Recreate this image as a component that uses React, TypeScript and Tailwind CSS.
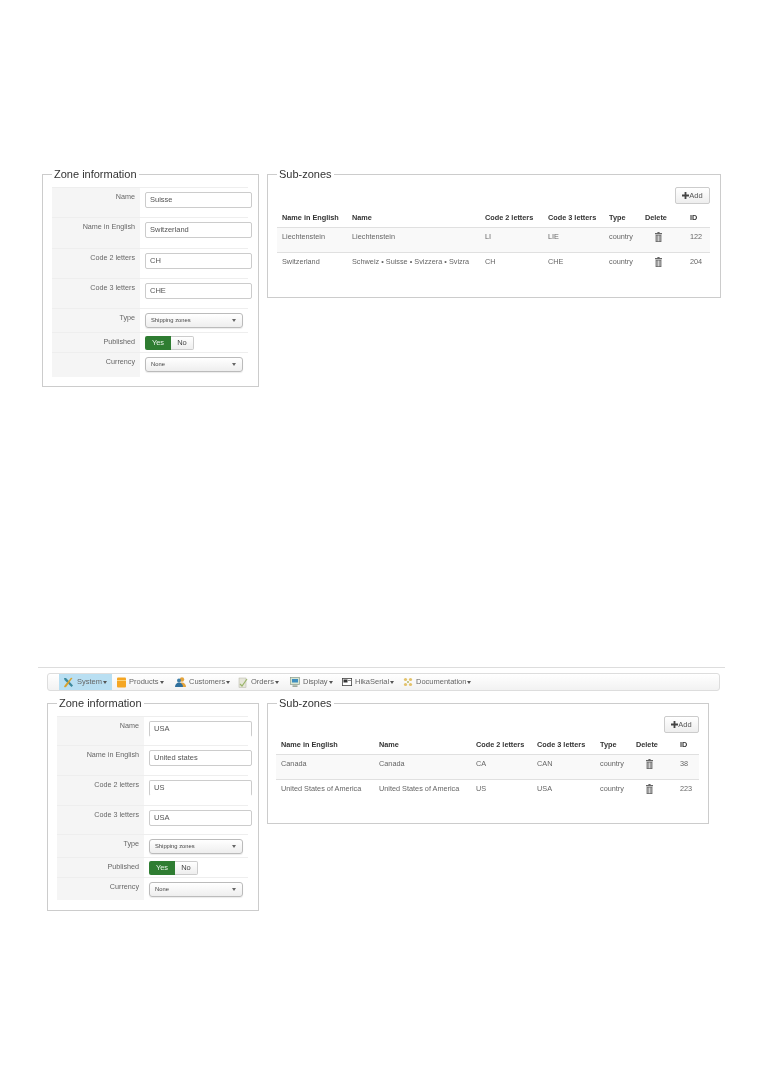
import { ReactNode } from "react";

type Field = { label: string; kind: "input" | "select" | "toggle"; value?: string; rowClass: string; openBottom?: boolean };
type SubZone = { english: string; name: string; code2: string; code3: string; id: number };

const topFields: Field[] = [
  { label: "Name", kind: "input", value: "Suisse", rowClass: "h-[30px]" },
  { label: "Name in English", kind: "input", value: "Switzerland", rowClass: "h-[31px]" },
  { label: "Code 2 letters", kind: "input", value: "CH", rowClass: "h-[30px]" },
  { label: "Code 3 letters", kind: "input", value: "CHE", rowClass: "h-[30px]" },
  { label: "Type", kind: "select", value: "Shipping zones", rowClass: "h-[24px]" },
  { label: "Published", kind: "toggle", rowClass: "h-[20px]" },
  { label: "Currency", kind: "select", value: "None", rowClass: "h-[25px]" },
];

const bottomFields: Field[] = [
  { label: "Name", kind: "input", value: "USA", rowClass: "h-[29px]", openBottom: true },
  { label: "Name in English", kind: "input", value: "United states", rowClass: "h-[30px]" },
  { label: "Code 2 letters", kind: "input", value: "US", rowClass: "h-[30px]", openBottom: true },
  { label: "Code 3 letters", kind: "input", value: "USA", rowClass: "h-[29px]" },
  { label: "Type", kind: "select", value: "Shipping zones", rowClass: "h-[23px]" },
  { label: "Published", kind: "toggle", rowClass: "h-[20px]" },
  { label: "Currency", kind: "select", value: "None", rowClass: "h-[23px]" },
];

const swissZones: SubZone[] = [
  { english: "Liechtenstein", name: "Liechtenstein", code2: "LI", code3: "LIE", id: 122 },
  { english: "Switzerland", name: "Schweiz • Suisse • Svizzera • Svizra", code2: "CH", code3: "CHE", id: 204 },
];

const usZones: SubZone[] = [
  { english: "Canada", name: "Canada", code2: "CA", code3: "CAN", id: 38 },
  { english: "United States of America", name: "United States of America", code2: "US", code3: "USA", id: 223 },
];

const Caret = () => <span className="ml-[1px] inline-block border-x-[2px] border-t-[3px] border-x-transparent border-t-[#555]" />;

const Trash = () => (
  <svg width="7" height="10" viewBox="0 0 7 10" className="block" fill="#666">
    <path d="M2.4 0h2.2v1H7v1.2H0V1h2.4z" />
    <path d="M.6 2.8h5.8V10H.6zM1.7 3.6v5.6h.7V3.6zm1.5 0v5.6h.7V3.6zm1.4 0v5.6h.7V3.600z" fillRule="evenodd" />
  </svg>
);

const FieldControl = ({ field }: { field: Field }) => {
  if (field.kind === "input") {
    return (
      <div
        className={`flex h-[16px] w-full items-center rounded-[2px] border border-[#ccc] bg-white pl-[4px] text-[7.5px] text-[#555] ${
          field.openBottom ? "border-b-transparent" : ""
        }`}
      >
        {field.value}
      </div>
    );
  }
  if (field.kind === "select") {
    return (
      <div className="flex h-[15px] items-center justify-between rounded-[3px] border border-[#bbb] bg-gradient-to-b from-white to-[#eee] pl-[5px] pr-[6px] text-[5.8px] text-[#444] shadow-[0_1px_1px_rgba(0,0,0,0.08)]">
        {field.value}
        <span className="border-x-[2px] border-t-[3px] border-x-transparent border-t-[#666]" />
      </div>
    );
  }
  return (
    <div className="flex h-[14px] text-[7.5px]">
      <span className="flex w-[26px] items-center justify-center rounded-l-[2px] bg-[#2f7d32] text-[#e8f2e8]">Yes</span>
      <span className="flex w-[23px] items-center justify-center rounded-r-[2px] border border-l-0 border-[#ccc] bg-gradient-to-b from-white to-[#eee] text-[#444]">No</span>
    </div>
  );
};

const ZoneInfo = ({
  fields,
  outerClass,
  bodyClass,
  labelClass,
  inputClass,
  selectClass,
}: {
  fields: Field[];
  outerClass: string;
  bodyClass: string;
  labelClass: string;
  inputClass: string;
  selectClass: string;
}) => (
  <fieldset className={`shrink-0 border border-[#ccc] ${outerClass}`}>
    <legend className="ml-[9px] px-[2px] text-[11px] leading-[15px] text-[#333]">Zone information</legend>
    <div className={bodyClass}>
      {fields.map((f) => (
        <div key={f.label} className={`flex border-t border-[#eee] ${f.rowClass}`}>
          <div className={`shrink-0 bg-[#f5f5f5] pt-[4px] pr-[5px] text-right text-[7.2px] leading-[10px] text-[#666] ${labelClass}`}>{f.label}</div>
          <div className={`pl-[5px] ${f.kind === "toggle" ? "pt-[3px]" : "pt-[4px]"} ${f.kind === "select" ? selectClass : f.kind === "input" ? inputClass : ""}`}>
            <FieldControl field={f} />
          </div>
        </div>
      ))}
    </div>
  </fieldset>
);

const SubZones = ({
  zones,
  cols,
  outerClass,
  bodyClass,
  tableClass,
  headClass,
}: {
  zones: SubZone[];
  cols: number[];
  outerClass: string;
  bodyClass: string;
  tableClass: string;
  headClass: string;
}) => (
  <fieldset className={`shrink-0 border border-[#ccc] ${outerClass}`}>
    <legend className="ml-[9px] px-[2px] text-[11px] leading-[15px] text-[#333]">Sub-zones</legend>
    <div className={bodyClass}>
      <div className="flex justify-end">
        <button className="flex h-[17px] w-[35px] items-center justify-center rounded-[2px] border border-[#ccc] bg-gradient-to-b from-white to-[#eee] text-[7.5px] text-[#555]">
          <svg width="7" height="7" viewBox="0 0 7 7" fill="#444">
            <path d="M2.6 0h1.8v2.600H7v1.800H4.400V7H2.600V4.400H0V2.600h2.600z" />
          </svg>
          Add
        </button>
      </div>
      <table className={`w-full table-fixed border-collapse text-[7.3px] leading-[10px] text-[#666] ${tableClass}`}>
        <colgroup>
          {cols.map((w, i) => (
            <col key={i} width={w} />
          ))}
        </colgroup>
        <thead>
          <tr className={`text-left text-[#333] ${headClass}`}>
            {["Name in English", "Name", "Code 2 letters", "Code 3 letters", "Type", "Delete", "ID"].map((h) => (
              <th key={h} className="pl-[5px] font-bold whitespace-nowrap">{h}</th>
            ))}
          </tr>
        </thead>
        <tbody>
          {zones.map((z, i) => (
            <tr key={z.id} className={`h-[25px] border-t border-[#e0e0e0] ${i === 0 ? "bg-[#f9f9f9]" : ""}`}>
              <Cell>{z.english}</Cell>
              <Cell>{z.name}</Cell>
              <Cell>{z.code2}</Cell>
              <Cell>{z.code3}</Cell>
              <Cell>country</Cell>
              <td className="pl-[15px] pt-[4px] align-top"><Trash /></td>
              <Cell>{z.id}</Cell>
            </tr>
          ))}
        </tbody>
      </table>
    </div>
  </fieldset>
);

const Cell = ({ children }: { children: ReactNode }) => <td className="pl-[5px] pt-[4px] align-top whitespace-nowrap">{children}</td>;

const NavIcon = ({ name }: { name: string }) => {
  switch (name) {
    case "System":
      return (
        <svg width="11" height="11" viewBox="0 0 11 11">
          <path d="M1 1l2 0 7 7.500-1.500 1.500L1.500 3z" fill="#3d8a9e" />
          <path d="M9.500 1L8 .8 2 8l-1 1.500 1 1 1.500-1z" fill="#d9a12c" />
        </svg>
      );
    case "Products":
      return (
        <svg width="9" height="11" viewBox="0 0 9 11">
          <rect x="0" y="0.500" width="9" height="10" rx="1" fill="#f5a623" />
          <rect x="0" y="3" width="9" height="1" fill="#fbd27a" />
        </svg>
      );
    case "Customers":
      return (
        <svg width="11" height="10" viewBox="0 0 11 10">
          <circle cx="7" cy="2.500" r="2.200" fill="#e3a33b" />
          <path d="M3 10c0-3 2-4.500 4-4.500s4 1.500 4 4.500z" fill="#e3a33b" />
          <circle cx="4" cy="3.500" r="2" fill="#3f7fa8" />
          <path d="M0 10c0-3 2-4.500 4-4.500S8 7 8 10z" fill="#2f6f9c" />
        </svg>
      );
    case "Orders":
      return (
        <svg width="10" height="11" viewBox="0 0 10 11">
          <rect x="1" y="1" width="7" height="9.500" fill="#e6e6da" stroke="#b5b5a5" strokeWidth="0.500" />
          <path d="M2 7l2 2 5-7" fill="none" stroke="#9ab56a" strokeWidth="1.200" />
        </svg>
      );
    case "Display":
      return (
        <svg width="10" height="10" viewBox="0 0 10 10">
          <rect x="0.500" y="0.500" width="9" height="7" fill="#d8e6d2" stroke="#8a9a8a" strokeWidth="0.700" />
          <rect x="2" y="2" width="6" height="3.500" fill="#3f8fc0" />
          <rect x="2.500" y="8.500" width="5" height="1.200" fill="#7a8a7a" />
        </svg>
      );
    case "HikaSerial":
      return (
        <svg width="10" height="8" viewBox="0 0 10 8">
          <rect x="0.400" y="0.400" width="9.200" height="7.200" fill="#fff" stroke="#444" strokeWidth="0.800" />
          <rect x="1.500" y="1.500" width="4" height="3" fill="#333" />
          <rect x="6" y="2" width="3" height="1" fill="#888" />
        </svg>
      );
    default:
      return (
        <svg width="10" height="10" viewBox="0 0 10 10" fill="#e3c26a">
          <circle cx="2.500" cy="2.500" r="1.600" />
          <circle cx="7.500" cy="2.500" r="1.600" />
          <circle cx="2.500" cy="7.500" r="1.600" />
          <circle cx="7.500" cy="7.500" r="1.600" />
          <circle cx="5" cy="5" r="1" fill="#b5b86a" />
        </svg>
      );
  }
};

const navItems = [
  { name: "System", itemClass: "w-[53px] bg-[#b9dff2] pl-[4px]" },
  { name: "Products", itemClass: "w-[59px] pl-[5px]" },
  { name: "Customers", itemClass: "w-[63px] pl-[4px]" },
  { name: "Orders", itemClass: "w-[52px] pl-[4px]" },
  { name: "Display", itemClass: "w-[52px] pl-[4px]" },
  { name: "HikaSerial", itemClass: "w-[61px] pl-[4px]" },
  { name: "Documentation", itemClass: "pl-[4px]" },
];

const NavBar = () => (
  <nav className="ml-[47px] mt-[5px] flex h-[18px] w-[673px] items-stretch rounded-[3px] border border-[#ddd] bg-gradient-to-b from-white to-[#f2f2f2] pl-[11px] text-[7.5px] text-[#666]">
    {navItems.map((item) => (
      <div key={item.name} className={`flex shrink-0 items-center gap-[3px] ${item.itemClass}`}>
        <NavIcon name={item.name} />
        <span className="flex items-center">{item.name}<Caret /></span>
      </div>
    ))}
  </nav>
);

export default function App() {
  return (
    <div className="min-h-[1080px] bg-white font-['Liberation_Sans',Arial,sans-serif] blur-[0.45px]">
      <div className="flex items-start gap-[8px] pl-[42px] pt-[167px]">
        <ZoneInfo
          fields={topFields}
          outerClass="h-[220px] w-[217px]"
          bodyClass="mt-[5px] w-[196px] ml-[9px]"
          labelClass="w-[88px]"
          inputClass="w-[112px] shrink-0"
          selectClass="w-[103px] shrink-0"
        />
        <SubZones
          zones={swissZones}
          cols={[70, 133, 63, 61, 36, 45, 25]}
          outerClass="h-[131px] w-[454px]"
          bodyClass="ml-[9px] mr-[10px] mt-[5px]"
          tableClass="mt-[5px]"
          headClass="h-[18px]"
        />
      </div>

      <div className="mx-[38px] mt-[280px] border-t border-[#ddd]" />
      <NavBar />

      <div className="mt-[5px] flex items-start gap-[8px] pl-[47px]">
        <ZoneInfo
          fields={bottomFields}
          outerClass="h-[215px] w-[212px]"
          bodyClass="mt-[5px] w-[191px] ml-[9px]"
          labelClass="w-[87px]"
          inputClass="w-[108px] shrink-0"
          selectClass="w-[99px] shrink-0"
        />
        <SubZones
          zones={usZones}
          cols={[98, 97, 61, 63, 36, 44, 24]}
          outerClass="h-[128px] w-[442px]"
          bodyClass="ml-[8px] mr-[9px] mt-[5px]"
          tableClass="mt-[4px]"
          headClass="h-[17px]"
        />
      </div>
    </div>
  );
}
